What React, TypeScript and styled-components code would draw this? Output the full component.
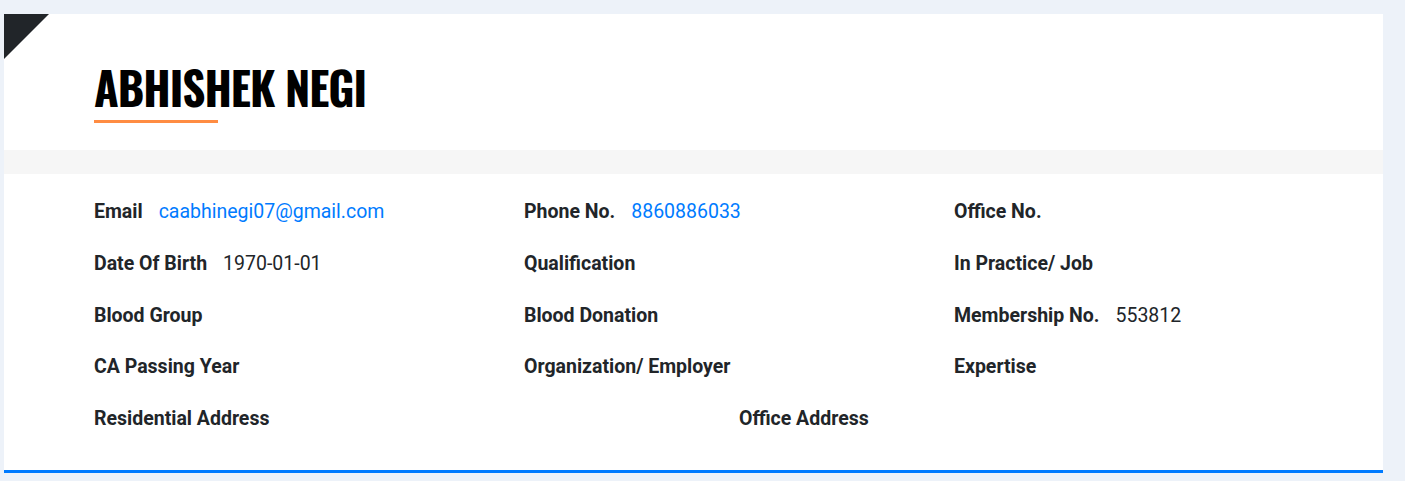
import React from "react";
import styled, { createGlobalStyle } from "styled-components";

// ─── Global ──────────────────────────────────────────────────────────────────
const GlobalStyle = createGlobalStyle`
  html, body {
    margin: 0;
    padding: 0;
    background: #edf2f9;
    font-family: Roboto, "Liberation Sans", Arial, sans-serif;
    color: #212529;
  }
`;

// ─── Styled Components ───────────────────────────────────────────────────────
const PageWrap = styled.div`
  padding: 14px 0 0 4px;
  min-height: 100vh;
  box-sizing: border-box;
`;

const Card = styled.div`
  position: relative;
  width: 1379px;
  background: #fff;
  border-bottom: 3px solid #007bff;
`;

const Corner = styled.div`
  position: absolute;
  top: 0;
  left: 0;
  width: 0;
  height: 0;
  border-top: 45px solid #212529;
  border-right: 45px solid transparent;
`;

const Header = styled.div`
  padding: 50px 0 27px 90px;
`;

const Name = styled.h1`
  margin: 0;
  font-family: Oswald, "DejaVu Sans Condensed", "DejaVu Sans", sans-serif;
  font-weight: 700;
  font-size: 45px;
  line-height: 45px;
  letter-spacing: -1px;
  color: #000;
  white-space: nowrap;
`;

const Underline = styled.div`
  width: 124px;
  height: 3px;
  margin-top: 11px;
  background: #ff8c42;
`;

const Band = styled.div`
  height: 24px;
  background: #f6f6f6;
`;

const Body = styled.div`
  padding: 24px 0 37px 90px;
  display: flex;
  flex-direction: column;
  gap: 23.75px;
`;

const Row = styled.div<{ cols: number }>`
  display: grid;
  grid-template-columns: repeat(${(p) => p.cols}, ${(p) => 1290 / p.cols}px);
`;

const Field = styled.div`
  display: flex;
  align-items: baseline;
  gap: 16px;
  font-size: 19.5px;
  line-height: 28px;
  white-space: nowrap;
`;

const Label = styled.span`
  font-weight: 700;
  color: #212529;
`;

const Value = styled.span<{ link?: boolean }>`
  font-weight: 400;
  color: ${(p) => (p.link ? "#007bff" : "#212529")};
`;

// ─── Data ────────────────────────────────────────────────────────────────────
type Item = { label: string; value?: string; link?: boolean };

const rows: Item[][] = [
  [
    { label: "Email", value: "caabhinegi07@gmail.com", link: true },
    { label: "Phone No.", value: "8860886033", link: true },
    { label: "Office No." },
  ],
  [
    { label: "Date Of Birth", value: "1970-01-01" },
    { label: "Qualification" },
    { label: "In Practice/ Job" },
  ],
  [
    { label: "Blood Group" },
    { label: "Blood Donation" },
    { label: "Membership No.", value: "553812" },
  ],
  [
    { label: "CA Passing Year" },
    { label: "Organization/ Employer" },
    { label: "Expertise" },
  ],
  [{ label: "Residential Address" }, { label: "Office Address" }],
];

// ─── Component ───────────────────────────────────────────────────────────────
const App: React.FC = () => (
  <>
    <GlobalStyle />
    <PageWrap>
      <Card>
        <Corner />
        <Header>
          <Name>ABHISHEK NEGI</Name>
          <Underline />
        </Header>
        <Band />
        <Body>
          {rows.map((row, i) => (
            <Row key={i} cols={row.length}>
              {row.map((f) => (
                <Field key={f.label}>
                  <Label>{f.label}</Label>
                  {f.value && <Value link={f.link}>{f.value}</Value>}
                </Field>
              ))}
            </Row>
          ))}
        </Body>
      </Card>
    </PageWrap>
  </>
);

export default App;
